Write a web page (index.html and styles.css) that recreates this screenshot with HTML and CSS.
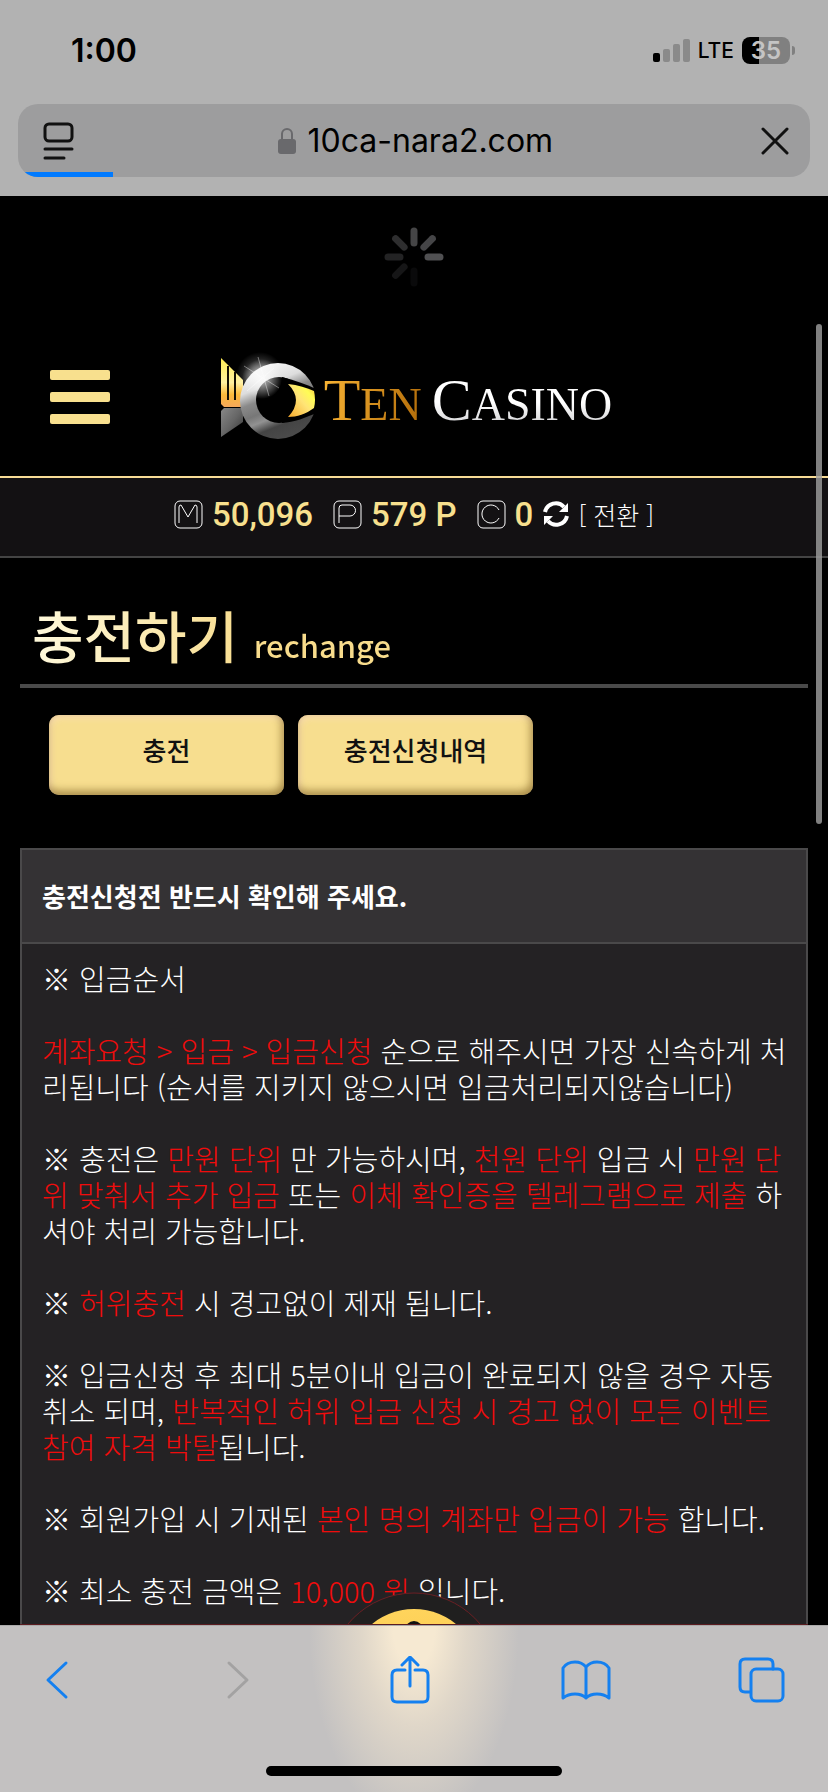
FILE: index.html
```html
<!DOCTYPE html>
<html lang="ko">
<head>
    <meta charset="UTF-8">
    <meta name="viewport" content="width=device-width, initial-scale=1.0">
    <title>TEN CASINO</title>
    <link rel="stylesheet" href="styles.css">
</head>
<body>

    <!-- Browser top -->
    <div class="browser-top">
        <div class="status-bar">
            <span class="time">1:00</span>
            <div class="status-icons">
                <svg width="37" height="23" viewBox="0 0 37 23">
                    <rect x="0" y="14" width="7" height="9" rx="2" fill="#000"/>
                    <rect x="10" y="10" width="7" height="13" rx="2" fill="#8a8a8a"/>
                    <rect x="20" y="5" width="7" height="18" rx="2" fill="#8a8a8a"/>
                    <rect x="30" y="0" width="7" height="23" rx="2" fill="#8a8a8a"/>
                </svg>
                <span class="network">LTE</span>
                <div class="battery">35</div>
            </div>
        </div>
        <div class="address-bar">
            <button class="icon-button" aria-label="Page menu">
                <svg width="32" height="38" viewBox="0 0 32 38" fill="none" stroke="#111" stroke-width="3" stroke-linecap="round">
                    <rect x="2" y="2" width="27" height="17" rx="4"/>
                    <path d="M2 27h27M2 36h19"/>
                </svg>
            </button>
            <div class="address">
                <label for="url" aria-label="Address">
                    <svg width="18" height="27" viewBox="0 0 18 27">
                        <path d="M4 13V7a5 5 0 0 1 10 0v6" fill="none" stroke="#69696c" stroke-width="2"/>
                        <rect x="0" y="12" width="18" height="15" rx="3" fill="#69696c"/>
                    </svg>
                </label>
                <input type="text" id="url" value="10ca-nara2.com">
            </div>
            <button class="icon-button" aria-label="Stop">
                <svg width="30" height="30" viewBox="0 0 30 30" stroke="#111" stroke-width="3" stroke-linecap="round">
                    <path d="M3 3L27 27M27 3L3 27"/>
                </svg>
            </button>
            <div class="progress"></div>
        </div>
    </div>

    <!-- Page -->
    <main class="page">
        <div class="spinner">
            <svg width="60" height="60" viewBox="-30 -30 60 60" stroke-width="7" stroke-linecap="round">
                <path d="M0-26V-14" stroke="#454546"/>
                <path d="M0-26V-14" stroke="#454547" transform="rotate(45)"/>
                <path d="M0-26V-14" stroke="#505052" transform="rotate(90)"/>
                <path d="M0 26V14" stroke="#0a0a0b"/>
                <path d="M0-26V-14" stroke="#161617" transform="rotate(225)"/>
                <path d="M0-26V-14" stroke="#232324" transform="rotate(270)"/>
                <path d="M0-26V-14" stroke="#2e2e2f" transform="rotate(315)"/>
            </svg>
        </div>

        <header class="site-header">
            <button class="menu-button" aria-label="Menu"><span></span><span></span><span></span></button>
            <a class="logo" href="#">
                <svg width="102" height="90" viewBox="0 0 102 90">
                    <defs>
                        <linearGradient id="gold" x1="0" y1="0" x2="0" y2="1">
                            <stop offset="0" stop-color="#ffed52"/>
                            <stop offset="0.5" stop-color="#fff0a0"/>
                            <stop offset="0.75" stop-color="#fbb93a"/>
                            <stop offset="1" stop-color="#f5a85b"/>
                        </linearGradient>
                        <linearGradient id="eye" x1="0" y1="1" x2="1" y2="0">
                            <stop offset="0" stop-color="#f6a92c"/>
                            <stop offset="0.5" stop-color="#ffe476"/>
                            <stop offset="0.75" stop-color="#fffc55"/>
                            <stop offset="1" stop-color="#f4b63c"/>
                        </linearGradient>
                        <linearGradient id="silver" x1="0.2" y1="0" x2="0.6" y2="1">
                            <stop offset="0" stop-color="#fff"/>
                            <stop offset="0.3" stop-color="#ddd"/>
                            <stop offset="0.45" stop-color="#8a8a8a"/>
                            <stop offset="0.6" stop-color="#777"/>
                            <stop offset="0.7" stop-color="#929292"/>
                            <stop offset="0.82" stop-color="#444"/>
                            <stop offset="1" stop-color="#4b4b4b"/>
                        </linearGradient>
                        <linearGradient id="tail" x1="0" y1="0" x2="1" y2="1">
                            <stop offset="0" stop-color="#888"/>
                            <stop offset="0.5" stop-color="#666"/>
                            <stop offset="1" stop-color="#333"/>
                        </linearGradient>
                        <radialGradient id="shine">
                            <stop offset="0" stop-color="#fff"/>
                            <stop offset="0.3" stop-color="#fff" stop-opacity="0.7"/>
                            <stop offset="1" stop-color="#fff" stop-opacity="0"/>
                        </radialGradient>
                    </defs>
                    <path d="M5 6L27 28V55H8L5 52Z" fill="url(#gold)"/>
                    <path d="M12 14V48M19 20V48" stroke="#151004" stroke-width="2"/>
                    <path d="M5 59L8 56H27V70L5 85Z" fill="url(#tail)"/>
                    <circle cx="44" cy="24" r="24" fill="url(#shine)" opacity="0.45"/>
                    <circle cx="62" cy="49" r="38" fill="url(#silver)"/>
                    <circle cx="63" cy="48" r="23" fill="#000"/>
                    <path d="M66 25C78 28 90 32 102 38V60C90 66 78 70 66 71Z" fill="#000"/>
                    <path d="M72 32C82 33 91 36 98 39Q100 48 98 56C90 62 81 65 72 65Q88 48 72 32Z" fill="url(#eye)"/>
                    <circle cx="46" cy="27" r="20" fill="url(#shine)" opacity="0.8"/>
                    <path d="M42 5L53 44M28 14L63 36M31 39L58 16" stroke="#fff" stroke-width="1" opacity="0.4"/>
                </svg>
                <span class="logo-text"><span class="ten">T<small>EN</small></span><span class="casino">C<small>ASINO</small></span></span>
            </a>
        </header>

        <div class="balance">
            <span class="coin">
                <svg width="29" height="29" viewBox="0 0 29 29" fill="none" stroke="#fff">
                    <rect x="1" y="1" width="27" height="27" rx="5"/>
                    <path d="M5 23V7Q5 5 7 5L14 17L21 5Q23 5 23 7V23"/>
                </svg>
                50,096
            </span>
            <span class="coin">
                <svg width="29" height="29" viewBox="0 0 29 29" fill="none" stroke="#fff">
                    <rect x="1" y="1" width="27" height="27" rx="5"/>
                    <path d="M6 23V8Q6 5 9 5H17A5 5 0 0 1 17 16H6"/>
                </svg>
                579 P
            </span>
            <span class="coin">
                <svg width="29" height="29" viewBox="0 0 29 29" fill="none" stroke="#fff">
                    <rect x="1" y="1" width="27" height="27" rx="5"/>
                    <path d="M22 10A9 9 0 1 0 22 18"/>
                </svg>
                0
            </span>
            <a class="exchange" href="#">
                <svg width="26" height="26" viewBox="0 0 26 26">
                    <path d="M2 11A11 11 0 0 1 21 6M24 15A11 11 0 0 1 5 20" fill="none" stroke="#fff" stroke-width="4"/>
                    <path d="M25 2V11H16ZM1 24V15H10Z" fill="#fff"/>
                </svg>
                [ 전환 ]
            </a>
        </div>

        <div class="content">
            <h1>충전하기 <small>rechange</small></h1>

            <div class="tabs">
                <button class="tab">충전</button>
                <button class="tab">충전신청내역</button>
            </div>

            <section class="notice">
                <h2>충전신청전 반드시 확인해 주세요.</h2>
                <div class="notice-text">
                    <p>※ 입금순서</p>
                    <p><em>계좌요청 &gt; 입금 &gt; 입금신청</em> 순으로 해주시면 가장 신속하게 처<br>리됩니다 (순서를 지키지 않으시면 입금처리되지않습니다)</p>
                    <p>※ 충전은 <em>만원 단위</em> 만 가능하시며, <em>천원 단위</em> 입금 시 <em>만원 단<br>위 맞춰서 추가 입금</em> 또는 <em>이체 확인증을 텔레그램으로 제출</em> 하<br>셔야 처리 가능합니다.</p>
                    <p>※ <em>허위충전</em> 시 경고없이 제재 됩니다.</p>
                    <p>※ 입금신청 후 최대 5분이내 입금이 완료되지 않을 경우 자동<br>취소 되며, <em>반복적인 허위 입금 신청 시 경고 없이 모든 이벤트<br>참여 자격 박탈</em>됩니다.</p>
                    <p>※ 회원가입 시 기재된 <em>본인 명의 계좌만 입금이 가능</em> 합니다.</p>
                    <p>※ 최소 충전 금액은 <em>10,000 원</em> 입니다.</p>
                </div>
            </section>
        </div>

        <div class="scrollbar"></div>
        <!-- Floating nav, mostly hidden under the toolbar -->
        <div class="float-nav">
            <svg width="180" height="32" viewBox="0 0 180 32">
                <defs>
                    <linearGradient id="coin" x1="0" y1="0" x2="0" y2="1">
                        <stop offset="0" stop-color="#ffd45c"/>
                        <stop offset="1" stop-color="#f6bd45"/>
                    </linearGradient>
                </defs>
                <circle cx="90" cy="87" r="86" fill="#201f1f" stroke="#6b1f24"/>
                <circle cx="90" cy="83" r="66" fill="url(#coin)"/>
                <circle cx="90" cy="38" r="9" fill="#111"/>
            </svg>
        </div>
    </main>

    <!-- Browser toolbar -->
    <nav class="toolbar">
        <div class="toolbar-buttons">
            <button class="icon-button" aria-label="Back">
                <svg width="46" height="48" viewBox="0 0 46 48"><path d="M24 7L6 24L24 41"/></svg>
            </button>
            <button class="icon-button" aria-label="Forward" disabled>
                <svg width="46" height="48" viewBox="0 0 46 48"><path d="M14 7L32 24L14 41"/></svg>
            </button>
            <button class="icon-button" aria-label="Share">
                <svg width="46" height="48" viewBox="0 0 46 48"><path d="M17 14H9Q4 14 4 19V41Q4 46 9 46H35Q40 46 40 41V19Q40 14 35 14H27M22 30V2M14 9L22 1L30 9"/></svg>
            </button>
            <button class="icon-button" aria-label="Bookmarks">
                <svg width="50" height="48" viewBox="0 0 50 48"><path d="M25 11Q21 6 14 6Q6 6 2 12V42Q7 38 14 38Q21 38 25 42Q29 38 36 38Q43 38 48 42V12Q44 6 36 6Q29 6 25 11ZM25 11V42"/></svg>
            </button>
            <button class="icon-button" aria-label="Tabs">
                <svg width="48" height="48" viewBox="0 0 48 48"><path d="M12 36H7Q2 36 2 31V8Q2 3 7 3H30Q35 3 35 8V13"/><rect x="13" y="13" width="32" height="32" rx="5"/></svg>
            </button>
        </div>
        <div class="home-indicator"></div>
    </nav>

</body>
</html>
```

FILE: styles.css
```css
* {
    box-sizing: border-box;
}

body {
    margin: 0;
    height: 100vh;
    display: flex;
    flex-direction: column;
    overflow: hidden;
    background-color: #000;
    color: #fff;
    font-family: 'Noto Sans CJK KR', sans-serif;
}

button {
    font-family: inherit;
    border: none;
    cursor: pointer;
}

.icon-button {
    display: flex;
    padding: 0;
    background: none;
}

/* Browser top */
.browser-top {
    padding: 32px 18px 19px;
    background-color: #b2b2b2;
    color: #000;
    font-family: 'Inter', sans-serif;
}

.status-bar {
    display: flex;
    justify-content: space-between;
    align-items: center;
    height: 36px;
    margin-bottom: 36px;
    padding: 0 15px 0 53px;
}

.time {
    font-size: 32px;
    font-weight: 600;
}

.status-icons {
    display: flex;
    align-items: center;
    gap: 8px;
}

.network {
    font-size: 21px;
    font-weight: 500;
}

.battery {
    position: relative;
    width: 48px;
    height: 27px;
    margin-right: 5px;
    border-radius: 8px;
    background: linear-gradient(to right, #000 35%, #808080 35%);
    color: #c4c4c4;
    font-size: 24px;
    font-weight: 600;
    line-height: 27px;
    text-align: center;
}

.battery::after {
    content: "";
    position: absolute;
    right: -5px;
    top: 9px;
    width: 3px;
    height: 9px;
    border-radius: 0 4px 4px 0;
    background-color: #808080;
}

.address-bar {
    position: relative;
    display: flex;
    justify-content: space-between;
    align-items: center;
    height: 73px;
    padding: 0 20px 0 25px;
    border-radius: 20px;
    background-color: #9d9d9e;
    overflow: hidden;
}

.address {
    display: flex;
    align-items: center;
    gap: 12px;
}

.address label {
    display: flex;
}

.address input {
    width: 250px;
    padding: 0;
    border: none;
    background: none;
    color: #000;
    font-family: inherit;
    font-size: 32px;
}

.progress {
    position: absolute;
    left: 0;
    bottom: 0;
    width: 12%;
    height: 5px;
    background-color: #007aff;
}

/* Page */
.page {
    position: relative;
    flex: 1;
    min-height: 0;
    overflow: hidden;
}

.spinner {
    display: flex;
    justify-content: center;
    padding-top: 31px;
}

.site-header {
    display: grid;
    grid-template-columns: 1fr auto 1fr;
    align-items: center;
    margin-top: 65px;
    padding: 0 50px 34px;
    border-bottom: 2px solid #f8dc96;
}

.menu-button {
    display: flex;
    flex-direction: column;
    gap: 12px;
    width: 60px;
    padding: 0;
    background: none;
}

.menu-button span {
    height: 10px;
    border-radius: 2px;
    background-color: #f8e08e;
}

.logo {
    display: flex;
    align-items: center;
    gap: 6px;
    color: #fff;
    text-decoration: none;
}

.logo-text {
    display: flex;
    gap: 10px;
    padding-top: 10px;
    font-family: 'Liberation Serif', serif;
    font-size: 60px;
    line-height: 66px;
}

.logo-text small {
    font-size: 46px;
}

.ten {
    background: linear-gradient(100deg, #f9b434, #b06a08);
    background-clip: text;
    -webkit-background-clip: text;
    color: transparent;
}

.casino {
    background: linear-gradient(#fff 50%, #b8b8bc);
    background-clip: text;
    -webkit-background-clip: text;
    color: transparent;
}

.balance {
    display: flex;
    justify-content: center;
    align-items: center;
    gap: 20px;
    height: 80px;
    padding-bottom: 6px;
    border-bottom: 2px solid #444;
    background-color: #131113;
}

.coin {
    display: flex;
    align-items: center;
    gap: 9px;
    color: #f8e08e;
    font-family: 'Roboto', sans-serif;
    font-size: 33px;
    font-weight: 500;
}

.exchange {
    display: flex;
    align-items: center;
    gap: 9px;
    margin-left: -10px;
    color: #fff;
    font-size: 25px;
    font-weight: 300;
    text-decoration: none;
}

.content {
    padding: 36px 20px 0;
}

h1 {
    margin: 0 0 27px;
    padding: 0 12px;
    border-bottom: 4px solid #4a4a4a;
    background: linear-gradient(to right, #fffbe0, #f8dc8c 30%);
    background-clip: text;
    -webkit-background-clip: text;
    color: transparent;
    font-size: 56px;
    font-weight: 500;
    line-height: 80px;
    padding-bottom: 10px;
}

h1 small {
    font-size: 31px;
    line-height: 1;
}

.tabs {
    display: flex;
    gap: 14px;
    margin-bottom: 53px;
    padding: 0 29px;
}

.tab {
    width: 235px;
    height: 80px;
    padding: 0 0 12px;
    border-radius: 10px;
    background-color: #f7de8f;
    box-shadow: inset -2px -4px 8px rgba(110, 80, 20, 0.6), inset 2px 3px 6px rgba(255, 225, 190, 0.8);
    color: #111;
    font-size: 26px;
    font-weight: 500;
}

.notice {
    border: 2px solid #4a494a;
    border-bottom: none;
    background-color: #242224;
}

h2 {
    margin: 0;
    padding: 0 20px;
    border-bottom: 2px solid #4a494a;
    background-color: #343234;
    font-size: 26px;
    font-weight: 700;
    line-height: 92px;
}

.notice-text {
    padding: 16px 20px;
    font-size: 29px;
    font-weight: 300;
    line-height: 36px;
    white-space: nowrap;
}

.notice-text p {
    margin: 0 0 36px;
}

.notice-text em {
    color: #f00c0c;
    font-style: normal;
}

.scrollbar {
    position: absolute;
    top: 128px;
    right: 6px;
    width: 6px;
    height: 500px;
    border-radius: 3px;
    background-color: rgba(160, 160, 160, 0.8);
}

.float-nav {
    position: absolute;
    left: 20px;
    right: 20px;
    bottom: 0;
    display: flex;
    justify-content: center;
    border-bottom: 1px solid #5a1c20;
}

/* Browser toolbar */
.toolbar {
    display: flex;
    flex-direction: column;
    justify-content: space-between;
    align-items: center;
    height: 167px;
    padding: 30px 42px 16px;
    border-top: 1px solid #aaa;
    background: radial-gradient(ellipse 105px 200px at 50% 0, #f6e9d2 20%, rgba(236, 224, 204, 0.7) 50%, rgba(195, 193, 193, 0)), #c3c1c1;
}

.toolbar-buttons {
    align-self: stretch;
    display: flex;
    justify-content: space-between;
}

.toolbar svg {
    fill: none;
    stroke: #1480f0;
    stroke-width: 3;
    stroke-linecap: round;
    stroke-linejoin: round;
}

.toolbar button:disabled svg {
    stroke: #a3a2a2;
}

.home-indicator {
    width: 296px;
    height: 10px;
    border-radius: 5px;
    background-color: #000;
}
```
